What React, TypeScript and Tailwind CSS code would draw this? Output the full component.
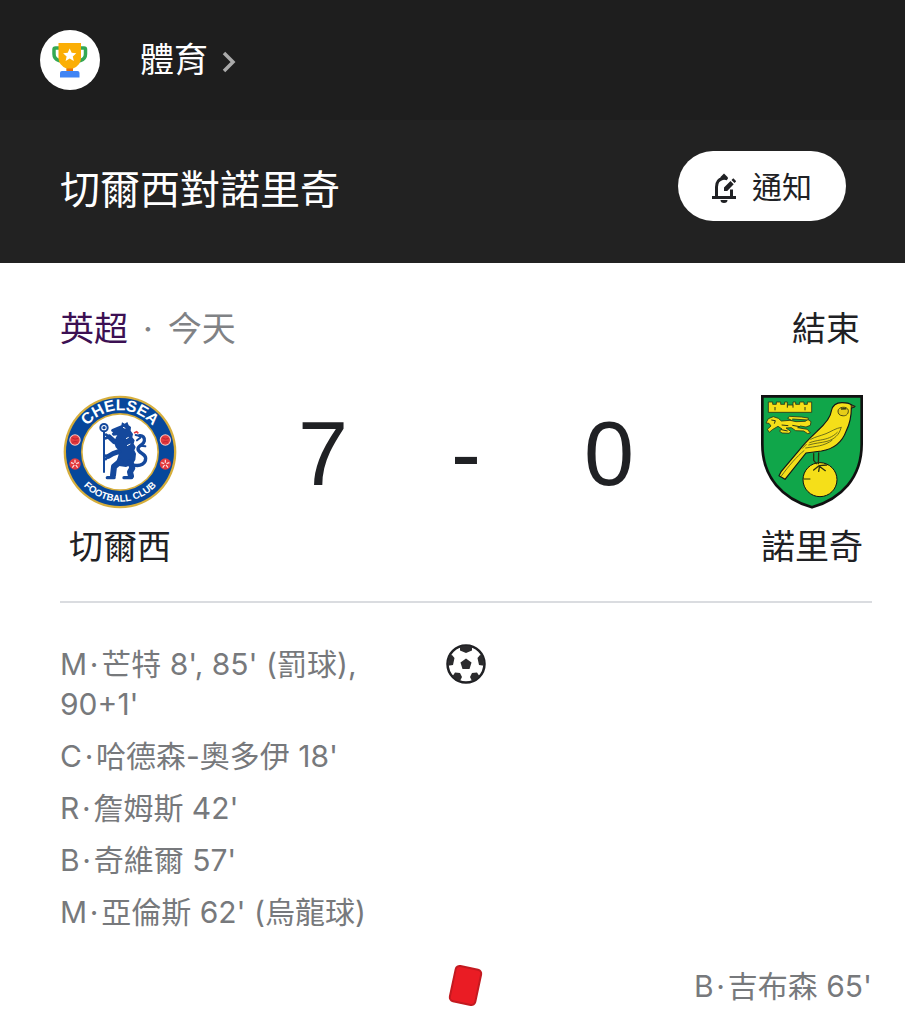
import { clsx } from 'clsx';

const MATCH = {
  title: '切爾西對諾里奇',
  league: '英超',
  date: '今天',
  status: '結束',
};

const GOALS = [
  { initial: 'M', detail: "芒特 8', 85' (罰球), 90+1'" },
  { initial: 'C', detail: "哈德森-奧多伊 18'" },
  { initial: 'R', detail: "詹姆斯 42'" },
  { initial: 'B', detail: "奇維爾 57'" },
  { initial: 'M', detail: "亞倫斯 62' (烏龍球)" },
];

const RED_CARDS = [{ initial: 'B', detail: "吉布森 65'" }];

const TrophyIcon = () => (
  <svg viewBox="0 0 60 60" className="h-15 w-15 shrink-0" aria-hidden="true">
    <circle cx="30" cy="30" r="30" fill="#fff" />
    <path d="M21 18h-5.500q-1.500 0-1.500 1.500V24q0 5 5 6.500l4 1" fill="none" stroke="#34a853" strokeWidth="3.500" />
    <path d="M38 18h6q1.500 0 1.500 1.500V24q0 5-5 6.500l-4 1" fill="none" stroke="#34a853" strokeWidth="3.500" />
    <path d="M18.500 13h22.500v15q0 7-8 10.500v2h-6.500v-2q-8-3.500-8-10.500z" fill="#fbae05" />
    <path d="M26.500 38.500h6.500v4h-6.500z" fill="#e8710a" />
    <path d="M20 47.500v-4.500q0-2 2-2h15.500q2 0 2 2v4.500z" fill="#4285f4" />
    <path d="M29.700 18.500l2 4.300 4.600.5-3.500 3.100 1 4.600-4.100-2.400-4.100 2.400 1-4.600-3.500-3.100 4.600-.5z" fill="#fff" />
  </svg>
);

const BellEditIcon = () => (
  <svg viewBox="0 0 24 30" className="h-[30px] w-6" fill="none" stroke="#202124" strokeWidth="3" aria-hidden="true">
    <path d="M0 24.500h24" />
    <path d="M4.500 24.500V14Q4.500 7 10.500 5.500q2.500-.6 5 .5" />
    <path d="M19.500 24.500v-8" />
    <path d="M8.500 6V4L12 .5 15.500 4v2z" fill="#202124" stroke="none" />
    <path d="M8.500 27h7a3.500 3 0 0 1-7 0z" fill="#202124" stroke="none" />
    <path d="M12 18v-3.500l6.500-6.500 3.200 3.200-6.500 6.800zM19.500 7l1.800-1.800 3 3-1.800 1.800z" fill="#202124" stroke="none" />
  </svg>
);

const ChelseaCrest = () => (
  <svg viewBox="0 0 342 342" className="h-[114px] w-[114px]" role="img" aria-label="切爾西">
    <defs>
      <path id="chelsea-top" d="M46 171a125 125 0 0 1 250 0" />
      <path id="chelsea-bottom" d="M22 171a149 149 0 0 0 298 0" />
    </defs>
    <circle cx="171" cy="171" r="169" fill="#d6ae3c" />
    <circle cx="171" cy="171" r="162" fill="#06479b" />
    <circle cx="171" cy="171" r="117" fill="#d6ae3c" />
    <circle cx="171" cy="171" r="112" fill="#fff" />
    <g fill="#fff" fontFamily="'Liberation Sans', sans-serif" fontWeight="700" textAnchor="middle">
      <text fontSize="47">
        <textPath href="#chelsea-top" startOffset="50%">CHELSEA</textPath>
      </text>
      <text fontSize="29">
        <textPath href="#chelsea-bottom" startOffset="50%">FOOTBALL CLUB</textPath>
      </text>
    </g>
    {[36, 307].map((x) => (
      <g key={x}>
        <circle cx={x} cy="135" r="17" fill="#f5c9c6" />
        <circle cx={x} cy="135" r="14" fill="#e23a3f" />
        <path d={`M${x - 10} 128q10 8 20 2M${x - 8} 142q8-4 16-1`} stroke="#bd2631" strokeWidth="3" fill="none" />
        <circle cx={x} cy="207" r="17" fill="#e23a3f" />
        <path d={`M${x} 207v-13M${x} 207l12-4M${x} 207l8 11M${x} 207l-8 11M${x} 207l-12-4`} stroke="#ffe5e2" strokeWidth="3.500" />
        <circle cx={x} cy="207" r="4" fill="#e23a3f" />
      </g>
    ))}
    <g transform="translate(54 51)" fill="#14489c" stroke="#14489c" strokeLinecap="round" strokeLinejoin="round">
      <circle cx="69" cy="47" r="11" fill="#fff" strokeWidth="6" />
      <circle cx="69" cy="47" r="5" stroke="none" />
      <path d="M69 59v121" strokeWidth="6" />
      {/* head, mane and torso */}
      <path
        d="M108 45l13-5 2-9 8 4 8-5 4 10 7 5-1 11 7 10-2 10 7 9-3 10 6 10-4 10 5 10-2 18-8 14-20 8-21-3-8-13 6-18 2-15-10-10-5-16 6-14 4-6-12 1-5-5 4-5-6-4 2-5z"
        stroke="none"
      />
      {/* forelegs */}
      <path d="M120 88l-20 1-15-14M113 119l-17 6-14 8" fill="none" strokeWidth="15" />
      <path d="M84 75l-9-7m8 8l-9 3m10 53l-14-1m12 1l-8 9" fill="none" strokeWidth="8" />
      {/* hind legs */}
      <path d="M118 148l-19 16-3 26M148 150l6 18-7 12 3 12" fill="none" strokeWidth="18" />
      <path d="M99 197H79M151 197h-22" fill="none" strokeWidth="10" />
      <path d="M158 159c21 5 36-4 36-20 0-15-22-15-23-28 0-12 17-11 19-24 2-10-5-17-14-16" fill="none" strokeWidth="10" />
      <path d="M177 72l-13-3m14 8l-10 8m25 18l-15-2" fill="none" strokeWidth="6" />
    </g>
    <path d="M180 97l7 3M189 131l8-4M192 152l10-5" fill="none" stroke="#fff" strokeWidth="3" />
    <path d="M213 114l8-4 5 5" fill="none" stroke="#e23a3f" strokeWidth="5" />
  </svg>
);

const NorwichCrest = () => (
  <svg viewBox="0 0 306 342" className="h-[114px] w-[102px]" role="img" aria-label="諾里奇">
    <path d="M4 4h298v143c0 101-61 164-149 190C65 311 4 248 4 147z" fill="#10a64a" stroke="#111" strokeWidth="8" />
    <g fill="#f5df19" stroke="#27351a" strokeWidth="2.500" strokeLinejoin="round">
      <path d="M22 21h13v7h11v-7h13v7h12v-7h8v9h17v-9h8v7h12v-7h13v7h10v-7h13v31H22z" />
      <path d="M42 36v10M132 36v10M79 30v8M96 30v8" strokeWidth="3" />
      <path d="M22 71l15-6 15 5 9 8 26-2 18 4 28-1 7-6 10 7-2 11-13 5-17-3-8 5 29 5 9 11-8 2-12-8-24-1-13-9-16 1 14 10-4 6-22-1-8-6 8-6-12-8-17 10-9 8-6-9 11-10-6-8-9-1z" />
      <path d="M92 76l-12-6 5-6 36 2 21 3-1 6-47-3" />
      <path d="M31 75l12 2-3 9m22 4l20 2m12-1l22 4M61 104l19 4" fill="none" strokeWidth="3" />
      <circle cx="177" cy="254" r="51" stroke="#111" strokeWidth="3" />
      <path
        d="M211 48c3-15 15-25 32-25 14 0 24 3 29 7l9 5-10 4c0 24-5 48-15 68-12 34-36 55-75 61l-46 6-63 79-18-11 7-13 55-65c13-18 32-36 53-56 21-19 40-38 42-60z"
        stroke="#151515"
        strokeWidth="3.500"
      />
      <path d="M231 48c0-13 28-16 31-2 1 13-9 18-19 16-8-1-12-6-12-14z" fill="#e6cd18" stroke="#4b4816" strokeWidth="3" />
    </g>
    <path d="M240 42l16-1" stroke="#3b4316" strokeWidth="5" />
    <g fill="none" stroke="#55591a" strokeWidth="2.500" strokeLinecap="round">
      <path d="M241 97c-18 3-29 12-46 19-18 7-31 9-46 17M240 99c-5 20-20 34-42 40-19 5-36 5-55 11M229 112c-14 15-32 20-50 23-12 2-22 4-33 8M213 136c-24 18-49 18-79 23" />
      <path d="M129 167c-23 19-45 45-68 76M136 148l-12 12" />
    </g>
    <g fill="none" stroke="#27300f" strokeWidth="4" strokeLinecap="round">
      <path d="M158 176v20l8 10M173 174l-1 32" />
      <path d="M173 213l-15 12M175 212l22-2M174 213l19 14M176 212l-3 17" />
      <path d="M128 252h19" strokeWidth="3" />
    </g>
    <path d="M270 29l13 5-12 6z" fill="#6b6420" stroke="#151515" strokeWidth="2" />
  </svg>
);

const BallIcon = () => (
  <svg viewBox="0 0 40 40" className="h-10 w-10" role="img" aria-label="進球">
    <defs>
      <clipPath id="ball-clip">
        <circle cx="20" cy="20" r="18" />
      </clipPath>
    </defs>
    <circle cx="20" cy="20" r="18.500" fill="#fff" stroke="#202124" strokeWidth="2.500" />
    <g fill="#2b2b2d" clipPath="url(#ball-clip)">
      <path d="M20 14.500l5.500 4-2 6.500h-7l-2-6.500z" />
      <path d="M14 1h12v5.500L20 9l-6-2.500z" />
      <path d="M1 12l5-1 2.500 3-1.500 7-6 1zM39 12l-5-1-2.500 3 1.500 7 6 1z" />
      <path d="M6 33l3-4.500 5 .5 2 4-3 6zM34 33l-3-4.500-5 .5-2 4 3 6z" />
    </g>
  </svg>
);

const RedCardIcon = () => (
  <svg viewBox="0 0 40 44" className="h-11 w-10" role="img" aria-label="紅牌">
    <rect x="6.500" y="3.500" width="26" height="36" rx="4" transform="rotate(12 19.500 21.500)" fill="#ea1c24" stroke="#c31a20" strokeWidth="2" />
  </svg>
);

const Team = ({ name, children }: { name: string; children: React.ReactNode }) => (
  <div className="flex flex-col items-center gap-3">
    {children}
    <span className="text-[34px] leading-[52px] whitespace-nowrap text-[#202124]">{name}</span>
  </div>
);

type MatchEvent = { initial: string; detail: string };

const EventList = ({ items, align }: { items: MatchEvent[]; align: 'left' | 'right' }) => (
  <ul className={clsx('flex flex-col gap-3', align === 'right' ? 'col-start-3 text-right' : 'pr-12')}>
    {items.map(({ initial, detail }) => (
      // hair spaces keep the dot clear of the name
      <li key={detail}>{`${initial}\u200a·\u200a${detail}`}</li>
    ))}
  </ul>
);

export default function App() {
  return (
    <div lang="zh-Hant" className="min-h-screen bg-white font-['Inter','Noto_Sans_CJK_TC',sans-serif]">
      <header className="text-white">
        <nav className="flex h-[120px] items-center bg-[#1e1e1e] px-10">
          <a href="#sports" className="flex items-center text-[34px] leading-10">
            <TrophyIcon />
            <span className="ml-10">體育</span>
            <svg viewBox="0 0 14 22" className="mt-1 ml-3.5 h-[22px] w-3.5" fill="none" stroke="#aaa" strokeWidth="3.500" aria-hidden="true">
              <path d="M2 2l9 9-9 9" />
            </svg>
          </a>
        </nav>
        <div className="flex h-[143px] items-center justify-between bg-[#222] pr-[59px] pb-3 pl-[60px]">
          <h1 className="pt-2 text-[40px] leading-[56px]">{MATCH.title}</h1>
          <button type="button" className="flex h-[70px] w-[168px] items-center justify-center gap-4 rounded-full bg-white pt-1 text-[30px] text-[#202124]">
            <BellEditIcon />
            通知
          </button>
        </div>
      </header>

      <main className="pt-10 pr-[33px] pl-[60px]">
        <div className="flex items-center justify-between pr-3 text-[34px] leading-[52px]">
          <div className="text-[#808285]">
            <a href="#league" className="text-[#3c1053]">{MATCH.league}</a>
            <span className="mx-[15px]">·</span>
            <span>{MATCH.date}</span>
          </div>
          <span className="text-[#202124]">{MATCH.status}</span>
        </div>

        {/* Score */}
        <section className="mt-10 grid grid-cols-[120px_1fr_120px] border-b-2 border-[#dadce0] pb-7">
          <Team name="切爾西">
            <ChelseaCrest />
          </Team>
          <div className="flex h-[114px] items-center justify-center pt-1 text-center font-['Liberation_Sans',sans-serif] text-[90px] leading-none text-[#202124]">
            <span className="w-1/4">7</span>
            <span className="w-1/4">-</span>
            <span className="w-1/4">0</span>
          </div>
          <Team name="諾里奇">
            <NorwichCrest />
          </Team>
        </section>

        {/* Match events */}
        <section className="mt-[41px] text-[30px] leading-10 text-[#77797c]">
          <div className="grid grid-cols-[1fr_40px_1fr] items-start">
            <EventList items={GOALS} align="left" />
            <BallIcon />
          </div>
          <div className="mt-8 grid grid-cols-[1fr_40px_1fr] items-center">
            <div className="col-start-2">
              <RedCardIcon />
            </div>
            <EventList items={RED_CARDS} align="right" />
          </div>
        </section>
      </main>
    </div>
  );
}
